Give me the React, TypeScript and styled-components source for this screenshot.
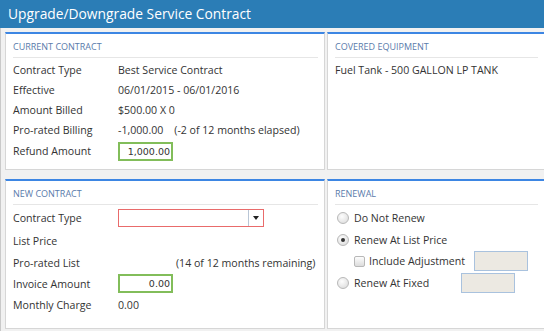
import React from "react";
import styled, {createGlobalStyle} from "styled-components";

const GlobalStyle = createGlobalStyle`
    html, body {
        margin: 0;
        padding: 0;
        background: #f1f1f1;
    }

    body {
        font-family: "Open Sans", "Liberation Sans", sans-serif;
        color: #333;
        font-size: 10.6px;
    }
`;

const Page = styled.div`
    width: 544px;
    height: 331px;
    overflow: hidden;
    background: #f1f1f1;
`;

const Header = styled.div`
    height: 28px;
    background: #2b7db6;
    color: #fff;
    font-size: 13.8px;
    line-height: 28px;
    padding-left: 8px;
`;

const Body = styled.div`
    display: grid;
    grid-template-columns: 320px 1fr;
    grid-template-rows: 138px 150px;
    column-gap: 2px;
    row-gap: 9px;
    padding: 4px 0 0 4px;
    border-left: 1px solid #c9c9c9;
    height: 100%;
`;

const Panel = styled.div<{ $right?: boolean }>`
    background: #fff;
    border: 1px solid #d6d6d6;
    border-top: 2px solid #3d86e3;
    padding: 7px 6px 0 7px;
    ${(p) => p.$right && "border-right: none;"}
`;

const Title = styled.div`
    font-size: 9px;
    text-transform: uppercase;
    color: #5a7bab;
    padding: 0 0 4px 0;
    border-bottom: 1px solid #e6e6e6;
    margin-bottom: 2px;
    line-height: 12px;
`;

const Row = styled.div<{ $h?: number }>`
    display: flex;
    align-items: center;
    height: ${(p) => p.$h || 20}px;
    white-space: nowrap;
`;

const Label = styled.span<{ $w?: number }>`
    width: ${(p) => p.$w || 105}px;
    flex: none;
`;

const Note = styled.span<{ $x?: number }>`
    margin-left: ${(p) => p.$x || 0}px;
`;

const NumBox = styled.div`
    width: 50px;
    height: 15px;
    border: 2px solid #82bd5a;
    font-family: "DejaVu Sans", sans-serif;
    font-size: 9.5px;
    text-align: right;
    line-height: 15px;
    padding-right: 1px;
`;

const Select = styled.div`
    width: 144px;
    height: 16px;
    border: 1px solid #e96b6b;
    display: flex;
    justify-content: flex-end;
`;

const Arrow = styled.div`
    width: 14px;
    border-left: 1px solid #b9c6d6;
    display: flex;
    align-items: center;
    justify-content: center;

    &::after {
        content: "";
        border-left: 3px solid transparent;
        border-right: 3px solid transparent;
        border-top: 4px solid #222;
    }
`;

const Radio = styled.span<{ $on?: boolean }>`
    width: 10px;
    height: 10px;
    border-radius: 50%;
    border: 1px solid #b8b8b8;
    background: radial-gradient(circle at 40% 35%, #fdfdfd, #d8d8d8);
    margin: 0 5px 0 2px;
    display: inline-flex;
    align-items: center;
    justify-content: center;
    flex: none;

    &::after {
        content: "";
        width: 4px;
        height: 4px;
        border-radius: 50%;
        background: ${(p) => (p.$on ? "#333" : "transparent")};
    }
`;

const Check = styled.span`
    width: 9px;
    height: 9px;
    border: 1px solid #b8b8b8;
    border-radius: 2px;
    background: linear-gradient(#fdfdfd, #dcdcdc);
    margin: 0 4px 0 19px;
    flex: none;
`;

const Field = styled.div`
    width: 52px;
    height: 18px;
    border: 1px solid #a9c2de;
    background: #ece9e2;
`;

export default function App() {
    return (
        <Page>
            <GlobalStyle/>
            <Header>Upgrade/Downgrade Service Contract</Header>
            <Body>
                <Panel>
                    <Title>Current Contract</Title>
                    <Row><Label>Contract Type</Label>Best Service Contract</Row>
                    <Row><Label>Effective</Label>06/01/2015 - 06/01/2016</Row>
                    <Row><Label>Amount Billed</Label>$500.00 X 0</Row>
                    <Row><Label>Pro-rated Billing</Label>-1,000.00<Note $x={11}>(-2 of 12 months elapsed)</Note></Row>
                    <Row $h={22}><Label>Refund Amount</Label><NumBox>1,000.00</NumBox></Row>
                </Panel>
                <Panel $right>
                    <Title>Covered Equipment</Title>
                    <Row>Fuel Tank - 500 GALLON LP TANK</Row>
                </Panel>
                <Panel>
                    <Title>New Contract</Title>
                    <Row $h={22}><Label>Contract Type</Label><Select><Arrow/></Select></Row>
                    <Row $h={23}><Label>List Price</Label></Row>
                    <Row $h={21}><Label>Pro-rated List</Label><Note $x={58}>(14 of 12 months remaining)</Note></Row>
                    <Row $h={21}><Label>Invoice Amount</Label><NumBox>0.00</NumBox></Row>
                    <Row $h={21}><Label>Monthly Charge</Label>0.00</Row>
                </Panel>
                <Panel $right>
                    <Title>Renewal</Title>
                    <Row $h={22}><Radio/>Do Not Renew</Row>
                    <Row $h={21}><Radio $on/>Renew At List Price</Row>
                    <Row $h={22}><Check/><Label $w={105}>Include Adjustment</Label><Field/></Row>
                    <Row $h={22}><Radio/><Label $w={107}>Renew At Fixed</Label><Field/></Row>
                </Panel>
            </Body>
        </Page>
    );
}
